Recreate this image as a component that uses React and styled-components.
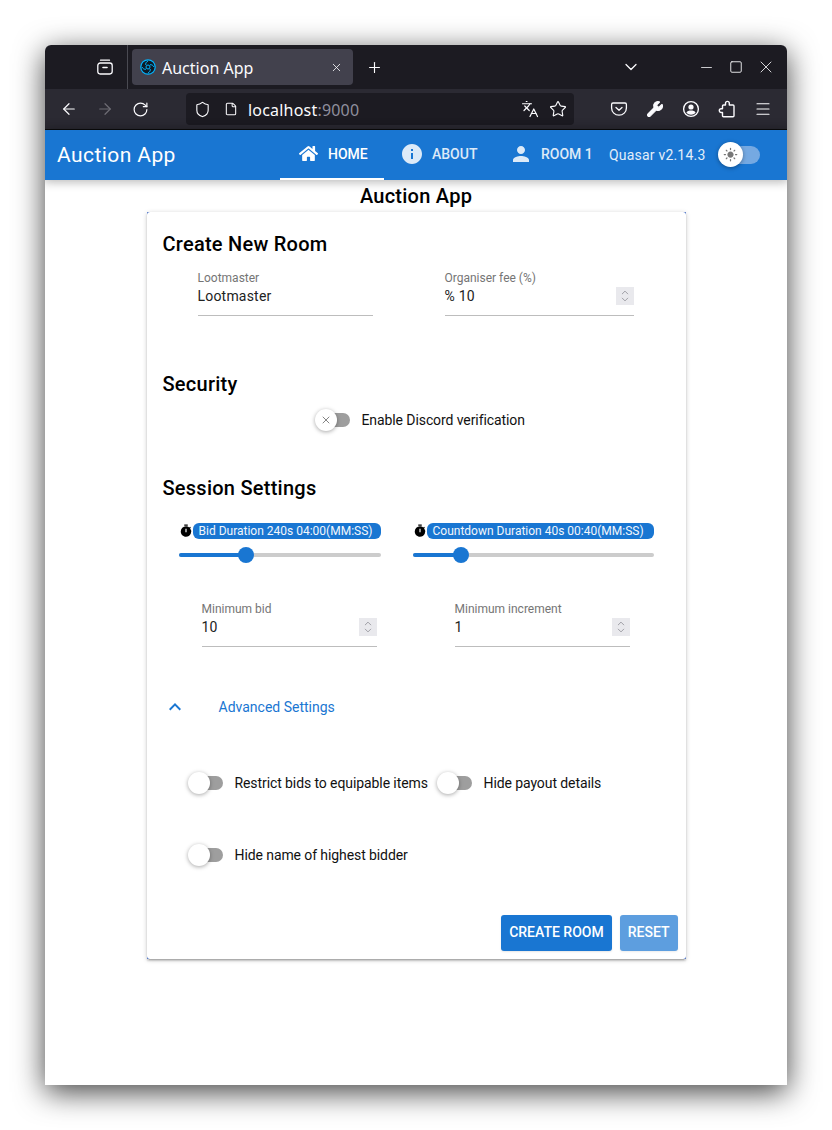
import React from "react";
import styled, { createGlobalStyle } from "styled-components";
import {
  ArrowLeft,
  ArrowRight,
  ChevronDown,
  ChevronUp,
  File,
  Languages,
  Menu,
  Minus,
  Plus,
  RotateCw,
  Shield,
  Square,
  Star,
  Wrench,
  X,
} from "lucide-react";
import { FaHome } from "react-icons/fa";
import {
  MdInfo,
  MdKeyboardArrowUp,
  MdLightMode,
  MdPerson,
  MdTimer,
} from "react-icons/md";

const GlobalStyle = createGlobalStyle`
  html, body {
    margin: 0;
    height: 1130px;
    overflow: hidden;
    background: #fff;
  }
  * { box-sizing: border-box; }
`;

const Screen = styled.div`
  padding: 45px;
`;

const BrowserWindow = styled.div`
  width: 742px;
  height: 1040px;
  background: #fff;
  border-radius: 6px 6px 0 0;
  box-shadow: 0 7px 30px rgba(0, 0, 0, 0.75);
  font-family: Roboto, sans-serif;
  overflow: hidden;
`;

/* firefox chrome */

const TabBar = styled.div`
  height: 44px;
  background: #1c1b22;
  display: flex;
  align-items: center;
  color: #fbfbfe;
`;

const ViewButton = styled.div`
  width: 83px;
  height: 44px;
  border-right: 1px solid #4a4a52;
  display: flex;
  align-items: center;
  justify-content: flex-end;
  padding-right: 14px;
`;

const Tab = styled.div`
  width: 221px;
  height: 36px;
  margin-left: 4px;
  padding: 0 10px 0 8px;
  background: #42414d;
  border-radius: 4px;
  display: flex;
  align-items: center;
  font: 16px "Noto Sans", sans-serif;
`;

const TabTitle = styled.span`
  flex: 1;
  margin-left: 6px;
  padding-top: 2px;
`;

const NewTab = styled.div`
  width: 42px;
  display: flex;
  justify-content: center;
`;

const TabSpacer = styled.div`
  flex: 1;
`;

const WindowControls = styled.div`
  display: flex;
  align-items: center;
  gap: 13.5px;
  margin-right: 11px;
  margin-left: 57px;
`;

const ToolBar = styled.div`
  height: 41px;
  background: #2b2a33;
  border-bottom: 1px solid #0c0c0d;
  display: flex;
  align-items: center;
  color: #fbfbfe;
`;

const NavButtons = styled.div`
  display: flex;
  align-items: center;
  gap: 18px;
  width: 141px;
  padding-left: 15px;
`;

const UrlBar = styled.div`
  width: 388px;
  height: 32px;
  background: #1c1b22;
  border-radius: 4px;
  display: flex;
  align-items: center;
  padding: 0 7px 0 8px;
`;

const UrlText = styled.div`
  flex: 1;
  margin-left: 10px;
  padding-top: 2px;
  font: 16px "Noto Sans", sans-serif;
  letter-spacing: 0.2px;
  color: #fbfbfe;
`;

const UrlPort = styled.span`
  color: #8f8f9d;
`;

const UrlActions = styled.div`
  display: flex;
  gap: 10px;
  align-items: center;
`;

const ToolIcons = styled.div`
  display: flex;
  align-items: center;
  gap: 18px;
  margin-left: 36px;
`;

/* quasar header */

const Header = styled.header`
  position: relative;
  height: 50px;
  background: #1976d2;
  color: #fff;
  display: flex;
  align-items: center;
  padding-left: 12px;
  box-shadow: 0 0 10px 2px rgba(0, 0, 0, 0.2), 0 0 10px rgba(0, 0, 0, 0.14);
`;

const AppTitle = styled.div`
  width: 223px;
  font-size: 21px;
  letter-spacing: 0.02em;
`;

const HeaderTabs = styled.nav`
  display: flex;
  height: 50px;
`;

const HeaderTab = styled.div`
  width: ${(p) => p.$width}px;
  display: flex;
  align-items: center;
  gap: ${(p) => p.$gap}px;
  font-size: 14px;
  font-weight: 500;
  padding-left: ${(p) => p.$pad}px;
  padding-bottom: 1px;
  white-space: nowrap;
  opacity: ${(p) => (p.$active ? 1 : 0.85)};
  border-bottom: 2px solid ${(p) => (p.$active ? "#fff" : "transparent")};
`;

const Version = styled.div`
  width: 109px;
  font-size: 14px;
  letter-spacing: 0.2px;
  color: #e3eefa;
`;

const ModeTrack = styled.div`
  position: relative;
  width: 36px;
  height: 18px;
  border-radius: 9px;
  background: #75a9e2;
  margin-left: 6px;
`;

const ModeThumb = styled.div`
  position: absolute;
  left: -6px;
  top: -4px;
  width: 25px;
  height: 25px;
  border-radius: 50%;
  background: #fff;
  color: #777;
  display: flex;
  align-items: center;
  justify-content: center;
  box-shadow: 0 1px 4px rgba(0, 0, 0, 0.35);
`;

/* page */

const Page = styled.main`
  display: flex;
  flex-direction: column;
  align-items: center;
  padding-top: 4px;
`;

const PageTitle = styled.h1`
  margin: 0 0 4px;
  font-size: 20px;
  line-height: 24px;
  font-weight: 500;
  color: #000;
  letter-spacing: 0.0125em;
`;

const Card = styled.section`
  width: 539px;
  height: 747px;
  background: #1f4fb8;
  border-radius: 1px;
  box-shadow: 0 1px 5px rgba(0, 0, 0, 0.2), 0 2px 2px rgba(0, 0, 0, 0.14),
    0 3px 1px -2px rgba(0, 0, 0, 0.12);
`;

const CardBody = styled.div`
  height: 100%;
  background: #fff;
  border-radius: 3px;
  padding: 20px 8px 8px 16px;
  display: flex;
  flex-direction: column;
  color: #000;
`;

const SectionTitle = styled.h2`
  margin: 0;
  margin-top: ${(p) => p.$top || 0}px;
  font-size: 20px;
  line-height: 24px;
  font-weight: 500;
  letter-spacing: 0.0125em;
`;

const FieldRow = styled.div`
  display: flex;
  margin-top: ${(p) => p.$top}px;
  padding-left: ${(p) => p.$left}px;
`;

const Field = styled.div`
  width: ${(p) => p.$width}px;
  margin-left: ${(p) => p.$gap || 0}px;
  height: 48px;
  padding-top: 2px;
  border-bottom: 1px solid #bdbdbd;
  display: flex;
  flex-direction: column;
`;

const FieldLabel = styled.label`
  font-size: 12px;
  line-height: 16px;
  color: #757575;
`;

const FieldValue = styled.div`
  position: relative;
  display: flex;
  align-items: center;
  justify-content: space-between;
  height: 20px;
  font-size: 14px;
  letter-spacing: 0.2px;
  color: #222;
`;

const Spinner = styled.span`
  width: 18px;
  height: 18px;
  background: #e9e9ed;
  color: #8f8f96;
  display: flex;
  flex-direction: column;
  align-items: center;
  justify-content: center;
  line-height: 0;
`;

const SpinnerUp = styled(ChevronUp)`
  margin-bottom: -2px;
`;

const SpinnerDown = styled(ChevronDown)`
  margin-top: -2px;
`;

const ToggleRow = styled.div`
  display: flex;
  margin-top: ${(p) => p.$top}px;
  padding-left: ${(p) => p.$left}px;
`;

const ToggleItem = styled.div`
  width: ${(p) => p.$width || "auto"};
  display: flex;
  align-items: center;
  height: 24px;
  font-size: 14px;
  letter-spacing: -0.09px;
  color: #111;
  white-space: nowrap;
`;

const ToggleTrack = styled.div`
  position: relative;
  width: 17px;
  height: 14px;
  margin-left: 18px;
  margin-right: 12px;
  background: #9e9e9e;
  border-radius: 0 7px 7px 0;
`;

const ToggleThumb = styled.div`
  position: absolute;
  left: -18px;
  top: -4px;
  width: 22px;
  height: 22px;
  border-radius: 50%;
  background: #fff;
  color: #777;
  display: flex;
  align-items: center;
  justify-content: center;
  box-shadow: 0 1px 4px rgba(0, 0, 0, 0.35);
`;

const SliderRow = styled.div`
  display: flex;
  gap: 32px;
  margin-top: 23px;
  padding-left: 16px;
`;

const SliderColumn = styled.div`
  width: ${(p) => p.$width}px;
`;

const SliderLabel = styled.div`
  display: flex;
  align-items: center;
  height: 16px;
  color: #000;
`;

const Pill = styled.span`
  flex: 1;
  height: 16px;
  padding-left: 6px;
  background: #1976d2;
  border-radius: 6px;
  color: #f2f7fc;
  font-size: 12px;
  line-height: 16px;
  white-space: nowrap;
`;

const SliderTrack = styled.div`
  position: relative;
  height: 4px;
  margin-top: 14px;
  background: #cccccc;
  border-radius: 2px;
`;

const SliderFill = styled.div`
  height: 4px;
  background: #1976d2;
  border-radius: 2px 0 0 2px;
`;

const SliderThumb = styled.div`
  position: absolute;
  top: -6px;
  width: 16px;
  height: 16px;
  margin-left: -8px;
  border-radius: 50%;
  background: #1976d2;
`;

const AdvancedRow = styled.div`
  display: flex;
  align-items: center;
  height: 24px;
  margin-top: 48px;
  color: #1976d2;
  font-size: 14px;
`;

const AdvancedIcon = styled.span`
  width: 56px;
  height: 24px;
  display: flex;
  align-items: center;
`;

const ButtonRow = styled.div`
  display: flex;
  justify-content: flex-end;
  gap: 8px;
  margin-top: auto;
`;

const Button = styled.button`
  height: 36px;
  padding: 0 8px 2px;
  border: 0;
  border-radius: 3px;
  background: #1976d2;
  opacity: ${(p) => (p.$faded ? 0.7 : 1)};
  color: #fff;
  font-family: Roboto, sans-serif;
  font-size: 14px;
  font-weight: 500;
  box-shadow: 0 1px 2px rgba(0, 0, 0, 0.1);
`;

const QuasarLogo = () => (
  <svg width="16" height="16" viewBox="0 0 16 16" fill="none">
    <circle cx="8" cy="8" r="7.8" fill="#00b4ff" />
    <circle cx="8" cy="8" r="6.6" fill="#0d1a26" />
    <circle cx="8" cy="8" r="2" stroke="#00b4ff" strokeWidth="1" />
    <path
      d="M8 2C6.200 3 5.400 4.400 5.800 6M14 8c-1-1.800-2.400-2.600-4-2.200M8 14c1.800-1 2.600-2.400 2.200-4M2 8c1 1.800 2.400 2.600 4 2.200"
      stroke="#00b4ff"
      strokeWidth="1"
    />
  </svg>
);

const ViewIcon = () => (
  <svg width="16" height="16" viewBox="0 0 16 16" fill="none" stroke="#fbfbfe" strokeWidth="1.3">
    <path d="M3.500 1.200h9" strokeLinecap="round" />
    <rect x="0.800" y="4" width="14.400" height="11" rx="2.400" />
    <path d="M6 8.500h4" strokeLinecap="round" strokeWidth="1.600" />
  </svg>
);

const PocketIcon = () => (
  <svg width="18" height="18" viewBox="0 0 18 18" fill="none" stroke="#fbfbfe" strokeWidth="1.300">
    <path d="M3 3h12c.8 0 1.400.6 1.400 1.400V8c0 4-3.300 7.200-7.400 7.200S1.600 12 1.600 8V4.400C1.600 3.600 2.200 3 3 3z" />
    <path d="M6 7.500 9 10.300l3-2.800" strokeLinecap="round" strokeLinejoin="round" />
  </svg>
);

const AccountIcon = () => (
  <svg width="18" height="18" viewBox="0 0 18 18" fill="none">
    <circle cx="9" cy="9" r="7.400" stroke="#fbfbfe" strokeWidth="1.400" />
    <circle cx="9" cy="7" r="2.600" fill="#fbfbfe" />
    <path d="M4.400 12.800C5.200 11 7 10.600 9 10.600s3.800.4 4.600 2.200C12.400 14 10.800 14.800 9 14.800s-3.400-.8-4.600-2z" fill="#fbfbfe" />
  </svg>
);

const ExtensionIcon = () => (
  <svg width="18" height="18" viewBox="0 0 18 18" fill="none" stroke="#fbfbfe" strokeWidth="1.400" strokeLinejoin="round">
    <path d="M7.500 5V3.300a1.900 1.900 0 0 1 3.800 0V5h3.700c.6 0 1 .4 1 1v9.700c0 .6-.4 1-1 1H5.500c-.6 0-1-.4-1-1V12.500H3.200a1.900 1.900 0 0 1 0-3.800h1.300V6c0-.6.4-1 1-1z" />
  </svg>
);

const StepArrows = () => (
  <Spinner>
    <SpinnerUp size={12} strokeWidth={1.800} />
    <SpinnerDown size={12} strokeWidth={1.800} />
  </Spinner>
);

const Toggle = ({ label, width, cross }) => (
  <ToggleItem $width={width}>
    <ToggleTrack>
      <ToggleThumb>{cross && <X size={12} strokeWidth={1.800} />}</ToggleThumb>
    </ToggleTrack>
    {label}
  </ToggleItem>
);

const DurationSlider = ({ width, label, percent }) => (
  <SliderColumn $width={width}>
    <SliderLabel>
      <MdTimer size={14} />
      <Pill>{label}</Pill>
    </SliderLabel>
    <SliderTrack>
      <SliderFill style={{ width: `${percent}%` }} />
      <SliderThumb style={{ left: `${percent}%` }} />
    </SliderTrack>
  </SliderColumn>
);

export default function App() {
  return (
    <Screen>
      <GlobalStyle />
      <BrowserWindow>
        <TabBar>
          <ViewButton>
            <ViewIcon />
          </ViewButton>
          <Tab>
            <QuasarLogo />
            <TabTitle>Auction App</TabTitle>
            <X size={13} strokeWidth={1.5} />
          </Tab>
          <NewTab>
            <Plus size={17} strokeWidth={1.6} />
          </NewTab>
          <TabSpacer />
          <ChevronDown size={20} strokeWidth={1.5} />
          <WindowControls>
            <Minus size={17} strokeWidth={1.1} />
            <Square size={14} strokeWidth={1.5} />
            <X size={20} strokeWidth={1} />
          </WindowControls>
        </TabBar>
        <ToolBar>
          <NavButtons>
            <ArrowLeft size={18} strokeWidth={1.6} />
            <ArrowRight size={18} strokeWidth={1.6} color="#6e6d75" />
            <RotateCw size={17} strokeWidth={1.7} />
          </NavButtons>
          <UrlBar>
            <Shield size={17} strokeWidth={1.6} />
            <File size={14} strokeWidth={1.8} style={{ marginLeft: 13 }} />
            <UrlText>
              localhost<UrlPort>:9000</UrlPort>
            </UrlText>
            <UrlActions>
              <Languages size={18} strokeWidth={1.6} />
              <Star size={18} strokeWidth={1.5} />
            </UrlActions>
          </UrlBar>
          <ToolIcons>
            <PocketIcon />
            <Wrench size={18} strokeWidth={1.4} fill="#fbfbfe" />
            <AccountIcon />
            <ExtensionIcon />
            <Menu size={18} strokeWidth={1.5} />
          </ToolIcons>
        </ToolBar>
        <Header>
          <AppTitle>Auction App</AppTitle>
          <HeaderTabs>
            <HeaderTab $width={104} $pad={19} $gap={10} $active>
              <FaHome size={19} />
              HOME
            </HeaderTab>
            <HeaderTab $width={109} $pad={16} $gap={8}>
              <MdInfo size={24} />
              ABOUT
            </HeaderTab>
            <HeaderTab $width={116} $pad={16} $gap={8}>
              <MdPerson size={24} />
              ROOM 1
            </HeaderTab>
          </HeaderTabs>
          <Version>Quasar v2.14.3</Version>
          <ModeTrack>
            <ModeThumb>
              <MdLightMode size={15} />
            </ModeThumb>
          </ModeTrack>
        </Header>
        <Page>
          <PageTitle>Auction App</PageTitle>
          <Card>
            <CardBody>
              <SectionTitle>Create New Room</SectionTitle>
              <FieldRow $top={12} $left={35}>
                <Field $width={175}>
                  <FieldLabel>Lootmaster</FieldLabel>
                  <FieldValue>Lootmaster</FieldValue>
                </Field>
                <Field $width={189} $gap={72}>
                  <FieldLabel>Organiser fee (%)</FieldLabel>
                  <FieldValue>
                    % 10
                    <StepArrows />
                  </FieldValue>
                </Field>
              </FieldRow>
              <SectionTitle $top={56}>Security</SectionTitle>
              <ToggleRow $top={12} $left={152}>
                <Toggle label="Enable Discord verification" cross />
              </ToggleRow>
              <SectionTitle $top={44}>Session Settings</SectionTitle>
              <SliderRow>
                <DurationSlider
                  width={202}
                  label="Bid Duration 240s 04:00(MM:SS)"
                  percent={33.4}
                />
                <DurationSlider
                  width={241}
                  label="Countdown Duration 40s 00:40(MM:SS)"
                  percent={20}
                />
              </SliderRow>
              <FieldRow $top={42} $left={39}>
                <Field $width={175}>
                  <FieldLabel>Minimum bid</FieldLabel>
                  <FieldValue>
                    10
                    <StepArrows />
                  </FieldValue>
                </Field>
                <Field $width={175} $gap={78}>
                  <FieldLabel>Minimum increment</FieldLabel>
                  <FieldValue>
                    1
                    <StepArrows />
                  </FieldValue>
                </Field>
              </FieldRow>
              <AdvancedRow>
                <AdvancedIcon>
                  <MdKeyboardArrowUp size={24} />
                </AdvancedIcon>
                Advanced Settings
              </AdvancedRow>
              <ToggleRow $top={52} $left={25}>
                <Toggle label="Restrict bids to equipable items" width="249px" />
                <Toggle label="Hide payout details" />
              </ToggleRow>
              <ToggleRow $top={48} $left={25}>
                <Toggle label="Hide name of highest bidder" />
              </ToggleRow>
              <ButtonRow>
                <Button>CREATE ROOM</Button>
                <Button $faded>RESET</Button>
              </ButtonRow>
            </CardBody>
          </Card>
        </Page>
      </BrowserWindow>
    </Screen>
  );
}
